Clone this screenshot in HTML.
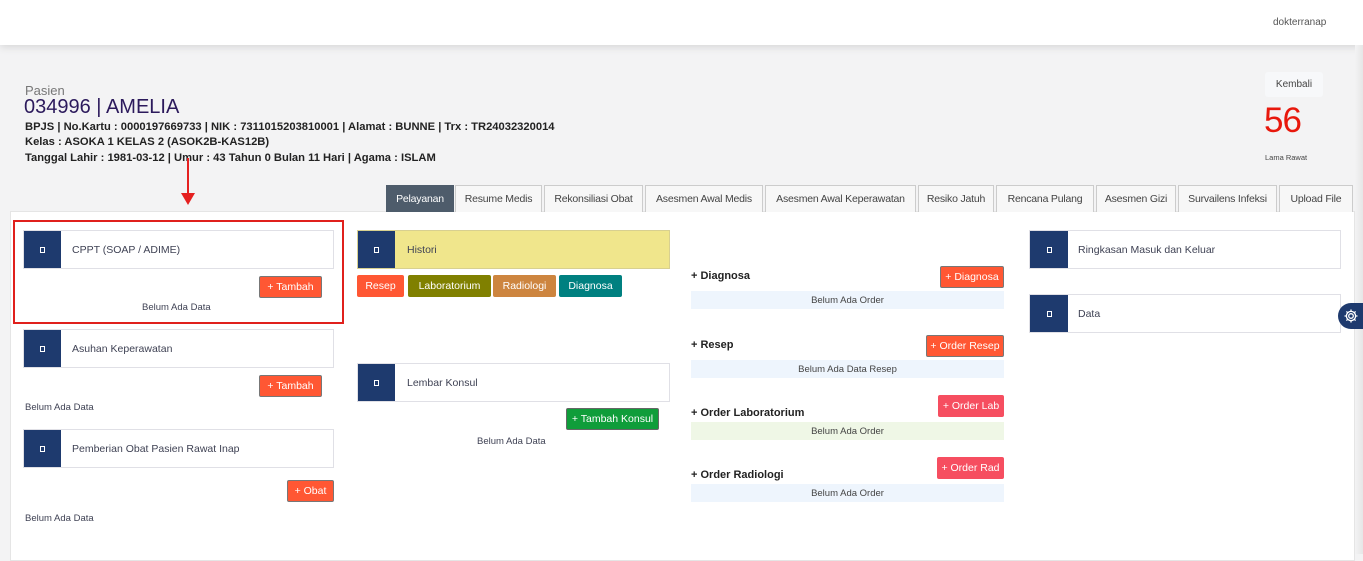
<!DOCTYPE html>
<html><head><meta charset="utf-8"><style>
*{margin:0;padding:0;box-sizing:border-box}
body{width:1363px;height:554px;overflow:hidden;background:#f3f3f4;font-family:"Liberation Sans",sans-serif;position:relative;color:#3f4254}
.a{position:absolute}
.hdr{left:0;top:0;width:1363px;height:45px;background:#fff;box-shadow:0 2px 8px rgba(0,0,0,.12)}
.tab{position:absolute;top:185px;height:27px;border:1px solid #ccc;border-bottom:none;background:#f7f7f7;font-size:10.5px;color:#444;display:flex;align-items:center;justify-content:center;letter-spacing:-.2px}
.panel{left:10px;top:211px;width:1345px;height:350px;background:#fff;border:1px solid #e5e5e5}
.card{position:absolute;height:39px;background:#fff;border:1px solid #e0e0e6;font-size:10.5px;color:#3f4254;display:flex;align-items:center}
.card .sq{width:37px;height:100%;background:#1e3a6e;display:flex;align-items:center;justify-content:center;margin-right:11px}
.card .sq i{width:5px;height:6px;border:1px solid #fff;display:block}
.btn{position:absolute;height:22px;color:#fff;font-size:10.5px;display:flex;align-items:center;justify-content:center;border-radius:2px}
.or{background:#ff5733;border:1px solid #777}
.t{position:absolute;font-size:9.5px;color:#3f4254}
.h{position:absolute;font-size:11px;font-weight:bold;color:#222}
.bar{position:absolute;left:691px;width:313px;height:18px;background:#eef5fd;font-size:9.5px;color:#444;display:flex;align-items:center;justify-content:center}
.pi{font-size:11.2px;font-weight:bold;color:#222}
</style></head><body>
<div class="a hdr"></div>
<div class="t" style="left:1273px;top:17px;font-size:10px;color:#555">dokterranap</div>
<div class="a" style="left:1355px;top:45px;width:8px;height:509px;background:linear-gradient(90deg,#f3f3f4,#e6e6e6)"></div>

<div class="t" style="left:25px;top:83px;font-size:13px;color:#777">Pasien</div>
<div class="t" style="left:24px;top:96px;font-size:20px;color:#2c1a5c">034996 | AMELIA</div>
<div class="t pi" style="left:25px;top:121px">BPJS | No.Kartu : 0000197669733 | NIK : 7311015203810001 | Alamat : BUNNE | Trx : TR24032320014</div>
<div class="t pi" style="left:25px;top:136px">Kelas : ASOKA 1 KELAS 2 (ASOK2B-KAS12B)</div>
<div class="t pi" style="left:25px;top:152px">Tanggal Lahir : 1981-03-12 | Umur : 43 Tahun 0 Bulan 11 Hari | Agama : ISLAM</div>

<div class="a" style="left:1265px;top:72px;width:58px;height:25px;background:#f7f8fa;border-radius:3px;font-size:10px;color:#444;display:flex;align-items:center;justify-content:center">Kembali</div>
<div class="t" style="left:1264px;top:101px;font-size:35px;color:#e8180c;letter-spacing:-1px">56</div>
<div class="t" style="left:1265px;top:153px;font-size:7.5px;color:#444">Lama Rawat</div>

<div class="a panel"></div>
<div class="tab" style="left:386px;width:68px;background:#4e5c6b;color:#fff;border-color:#4e5c6b">Pelayanan</div>
<div class="tab" style="left:455px;width:87px">Resume Medis</div>
<div class="tab" style="left:544px;width:99px">Rekonsiliasi Obat</div>
<div class="tab" style="left:645px;width:118px">Asesmen Awal Medis</div>
<div class="tab" style="left:765px;width:151px">Asesmen Awal Keperawatan</div>
<div class="tab" style="left:918px;width:76px">Resiko Jatuh</div>
<div class="tab" style="left:996px;width:98px">Rencana Pulang</div>
<div class="tab" style="left:1096px;width:80px">Asesmen Gizi</div>
<div class="tab" style="left:1178px;width:99px">Survailens Infeksi</div>
<div class="tab" style="left:1279px;width:74px">Upload File</div>

<div class="a" style="left:187px;top:158px;width:2px;height:37px;background:#e52020"></div>
<div class="a" style="left:181px;top:193px;width:0;height:0;border-left:7px solid transparent;border-right:7px solid transparent;border-top:12px solid #e52020"></div>
<div class="a" style="left:13px;top:220px;width:331px;height:104px;border:2px solid #e0201c"></div>

<div class="card" style="left:23px;top:230px;width:311px"><div class="sq"><i></i></div>CPPT (SOAP / ADIME)</div>
<div class="btn or" style="left:259px;top:276px;width:63px">+ Tambah</div>
<div class="t" style="left:142px;top:302px">Belum Ada Data</div>
<div class="card" style="left:23px;top:329px;width:311px"><div class="sq"><i></i></div>Asuhan Keperawatan</div>
<div class="btn or" style="left:259px;top:375px;width:63px">+ Tambah</div>
<div class="t" style="left:25px;top:402px">Belum Ada Data</div>
<div class="card" style="left:23px;top:429px;width:311px"><div class="sq"><i></i></div>Pemberian Obat Pasien Rawat Inap</div>
<div class="btn or" style="left:287px;top:480px;width:47px">+ Obat</div>
<div class="t" style="left:25px;top:513px">Belum Ada Data</div>

<div class="card" style="left:357px;top:230px;width:313px;background:#f0e68c;border-color:#d8d090"><div class="sq" style="margin-right:12px"><i></i></div>Histori</div>
<div class="btn" style="left:357px;top:275px;width:47px;background:#ff5733">Resep</div>
<div class="btn" style="left:408px;top:275px;width:83px;background:#808000">Laboratorium</div>
<div class="btn" style="left:493px;top:275px;width:63px;background:#cd853f">Radiologi</div>
<div class="btn" style="left:559px;top:275px;width:63px;background:#008080">Diagnosa</div>
<div class="card" style="left:357px;top:363px;width:313px"><div class="sq" style="margin-right:12px"><i></i></div>Lembar Konsul</div>
<div class="btn" style="left:566px;top:408px;width:93px;background:#0f9d3a;border:1px solid #666">+ Tambah Konsul</div>
<div class="t" style="left:477px;top:436px">Belum Ada Data</div>

<div class="h" style="left:691px;top:270px">+ Diagnosa</div>
<div class="btn or" style="left:940px;top:266px;width:64px">+ Diagnosa</div>
<div class="bar" style="top:291px">Belum Ada Order</div>
<div class="h" style="left:691px;top:339px">+ Resep</div>
<div class="btn or" style="left:926px;top:335px;width:78px">+ Order Resep</div>
<div class="bar" style="top:360px">Belum Ada Data Resep</div>
<div class="h" style="left:691px;top:407px">+ Order Laboratorium</div>
<div class="btn" style="left:938px;top:395px;width:66px;background:#f64e60">+ Order Lab</div>
<div class="bar" style="top:422px;background:#eff7e6">Belum Ada Order</div>
<div class="h" style="left:691px;top:469px">+ Order Radiologi</div>
<div class="btn" style="left:937px;top:457px;width:67px;background:#f64e60">+ Order Rad</div>
<div class="bar" style="top:484px">Belum Ada Order</div>

<div class="card" style="left:1029px;top:230px;width:312px"><div class="sq" style="width:38px;margin-right:10px"><i></i></div>Ringkasan Masuk dan Keluar</div>
<div class="card" style="left:1029px;top:294px;width:312px"><div class="sq" style="width:38px;margin-right:10px"><i></i></div>Data</div>

<div class="a" style="left:1338px;top:303px;width:30px;height:26px;background:#1e3a6e;border-radius:13px 0 0 13px;display:flex;align-items:center;padding-left:5px">
<svg width="16" height="16" viewBox="0 0 16 16" fill="none" stroke="#fff" stroke-width="1.3"><circle cx="8" cy="8" r="2.3"/><path d="M8 1.5v2M8 12.5v2M1.5 8h2M12.5 8h2M3.4 3.4l1.4 1.4M11.2 11.2l1.4 1.4M3.4 12.6l1.4-1.4M11.2 4.8l1.4-1.4"/><circle cx="8" cy="8" r="4.6"/></svg></div>
</body></html>
